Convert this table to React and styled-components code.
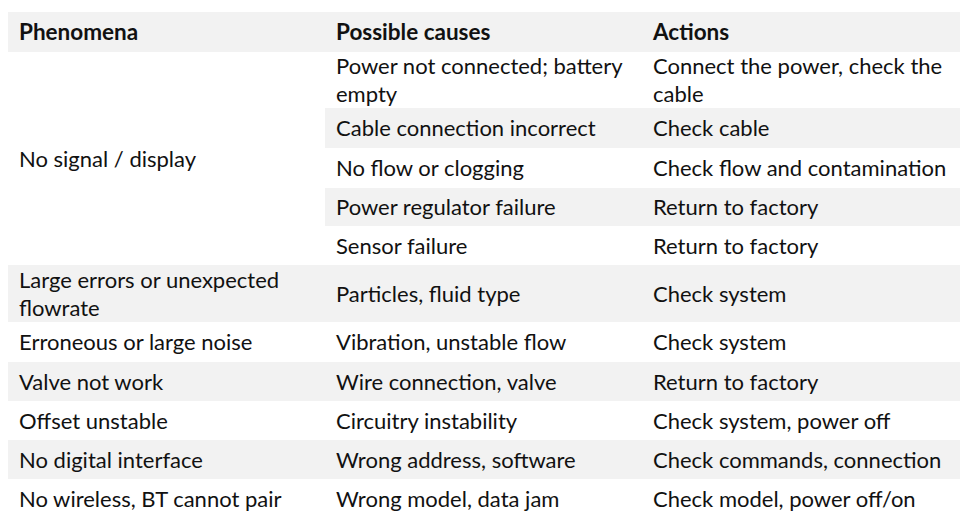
import React from "react";
import styled, { createGlobalStyle } from "styled-components";

const GlobalStyle = createGlobalStyle`
  html, body {
    margin: 0;
    padding: 0;
    background: #ffffff;
  }
  body {
    font-family: Lato, "Open Sans", sans-serif;
    color: #111111;
  }
`;

// row heights, header first
const rowHeights = [40, 56, 40, 40, 38, 39, 57, 40, 39, 39, 39, 39];

const signalCauses = [
  ["Power not connected; battery empty", "Connect the power, check the cable"],
  ["Cable connection incorrect", "Check cable"],
  ["No flow or clogging", "Check flow and contamination"],
  ["Power regulator failure", "Return to factory"],
  ["Sensor failure", "Return to factory"],
];

const otherRows = [
  ["Large errors or unexpected flowrate", "Particles, fluid type", "Check system"],
  ["Erroneous or large noise", "Vibration, unstable flow", "Check system"],
  ["Valve not work", "Wire connection, valve", "Return to factory"],
  ["Offset unstable", "Circuitry instability", "Check system, power off"],
  ["No digital interface", "Wrong address, software", "Check commands, connection"],
  ["No wireless, BT cannot pair", "Wrong model, data jam", "Check model, power off/on"],
];

const App = () => {
  return (
    <Page>
      <GlobalStyle />
      <Table>
        {/* header */}
        <HeadCell shade>Phenomena</HeadCell>
        <HeadCell shade>Possible causes</HeadCell>
        <HeadCell shade>Actions</HeadCell>

        {/* no signal group */}
        <Cell span={5}>No signal / display</Cell>
        {signalCauses.map(([cause, action], i) => (
          <React.Fragment key={cause}>
            <Cell shade={i % 2 === 1}>{cause}</Cell>
            <Cell shade={i % 2 === 1}>{action}</Cell>
          </React.Fragment>
        ))}

        {/* the rest */}
        {otherRows.map((row, i) =>
          row.map((text, j) => (
            <Cell key={i + "-" + j} shade={i % 2 === 0}>
              {text}
            </Cell>
          ))
        )}
      </Table>
    </Page>
  );
};

const Page = styled.div`
  width: 963px;
  height: 525px;
  padding: 12px 0 0 8px;
  box-sizing: border-box;
  overflow: hidden;
`;

const Table = styled.div`
  width: 952px;
  display: grid;
  grid-template-columns: 317px 317px 318px;
  grid-template-rows: ${rowHeights.map((h) => h + "px").join(" ")};
`;

const Cell = styled.div`
  display: flex;
  align-items: center;
  padding: 0 6px 0 11px;
  font-size: 22px;
  line-height: 28px;
  background: ${(p) => (p.shade ? "#f2f2f2" : "#ffffff")};
  grid-row: ${(p) => (p.span ? `span ${p.span}` : "auto")};
`;

const HeadCell = styled(Cell)`
  font-weight: 700;
  font-size: 22.5px;
`;

export default App;
